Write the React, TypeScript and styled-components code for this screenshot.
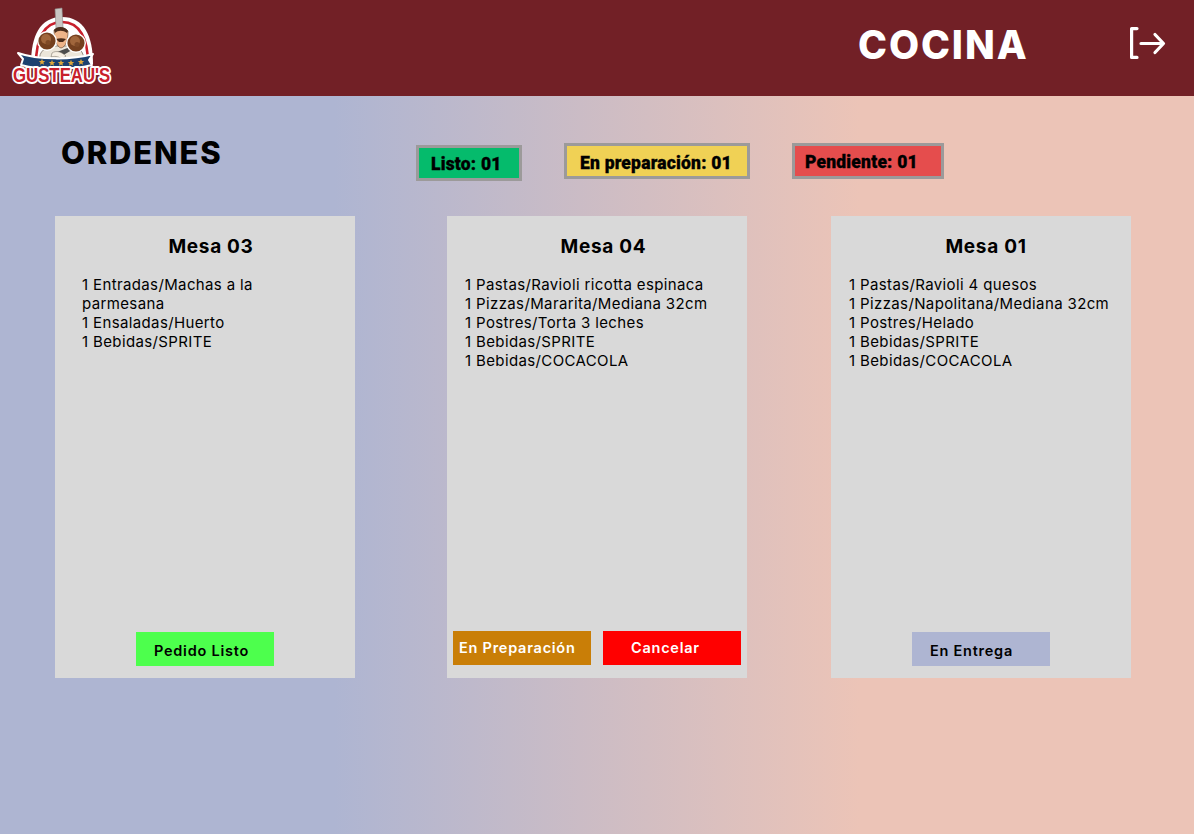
import React from "react";
import styled, { createGlobalStyle } from "styled-components";

const Global = createGlobalStyle`
  html, body { margin: 0; padding: 0; }
  body { font-family: "Inter", "Liberation Sans", sans-serif; color: #000; }
`;
const Page = styled.div`
  width: 1194px; height: 834px; overflow: hidden;
  background: linear-gradient(90deg, #aeb5d2 28%, #ecc4b7 72%);
`;
const Header = styled.header`
  height: 96px; background: #722026; display: flex; align-items: flex-start; padding-left: 5px;
`;
const LogoBox = styled.div` width: 110px; height: 86px; margin-top: 3px; flex: none; `;
const Section = styled.h1`
  margin: 21px 0 0 743px; color: #fff; font: 800 39px/48px "Inter", sans-serif; letter-spacing: 1.9px; width: 272px; flex: none;
`;
const IconBox = styled.div` width: 36px; height: 32px; margin-top: 27px; `;
const Summary = styled.div`
  height: 120px; display: flex;
`;
const Title = styled.h2`
  margin: 38px 0 0 61px; width: 355px; font: 800 31px/38px "Inter", sans-serif; letter-spacing: 1.8px; flex: none;
`;
const Badge = styled.div<{ $bg: string; $w: number; $top: number; $gap: number; $pad: number; $line: number }>`
  box-sizing: border-box; height: 36px; width: ${p => p.$w}px; margin-top: ${p => p.$top}px; margin-left: ${p => p.$gap}px;
  padding-left: ${p => p.$pad}px; background: ${p => p.$bg}; border: 3px solid #9c9a9a;
  font: 900 17.5px/${p => p.$line}px "Roboto", sans-serif; letter-spacing: .2px; -webkit-text-stroke: .3px #000; white-space: nowrap;
`;
const Cards = styled.div` display: flex; padding-left: 55px; `;
const Card = styled.article<{ $gap: number; $inset: number }>`
  box-sizing: border-box; width: 300px; height: 462px; margin-left: ${p => p.$gap}px; background: #d9d9d9;
  padding: 19px 6px 12px ${p => p.$inset}px; display: flex; flex-direction: column;
`;
const CardTitle = styled.h3<{ $shift: number }>`
  margin: 0 12px 16px ${p => p.$shift}px; text-align: center; font: 700 19px/24px "Inter", sans-serif; letter-spacing: .7px;
`;
const Items = styled.ul`
  list-style: none; margin: 0; padding: 0; flex: 1; font: 400 15px/19px "Inter", sans-serif; letter-spacing: .37px;
`;
const Item = styled.li``;
const Actions = styled.div<{ $left: number; $gap: number; $bottom: number }>`
  display: flex; gap: ${p => p.$gap}px; margin-left: ${p => p.$left}px; margin-bottom: ${p => p.$bottom}px;
`;
const Action = styled.button<{ $bg: string; $fg: string; $pad: number; $line: number }>`
  width: 138px; height: 34px; flex: none; border: 0; border-radius: 0; background: ${p => p.$bg}; color: ${p => p.$fg};
  padding: 0 0 0 ${p => p.$pad}px; text-align: left; font: 600 14.5px/${p => p.$line}px "Inter", sans-serif; letter-spacing: .75px; white-space: nowrap;
`;

const STAR = "M0 -3.2 L.9 -1 L3.2 -1 L1.4 .4 L2 2.7 L0 1.4 L-2 2.7 L-1.4 .4 L-3.2 -1 L-.9 -1 Z";

const Ball = ({ x, y }: { x: number; y: number }) => (
  <g>
    <circle cx={x} cy={y} r="10" fill="#fff" />
    <circle cx={x} cy={y} r="8.6" fill="#74401f" />
    <circle cx={x - 1} cy={y - 2} r="5" fill="#a0663c" />
    <circle cx={x + 1} cy={y + 1.5} r="2.5" fill="#7f4a27" />
  </g>
);

const Logo = () => (
  <svg width="110" height="86" viewBox="5 3 110 86" role="img" aria-label="Logo Gusteau's">
    <path d="M31 64 C31 36 40 17 62 17 C84 17 93 36 93 64 Z" fill="#fff" />
    <path d="M36 64 C36 39 44 22 62 22 C80 22 88 39 88 64" fill="#fff" stroke="#c8202c" strokeWidth="2.6" />
    <path d="M40 60 C38 52 46 46 55 46 L70 46 C78 46 85 52 83 60 Z" fill="#ece6da" stroke="#6b6257" strokeWidth=".7" />
    <path d="M55 9 L62 8 L63 28 L56 28 Z" fill="#c9c7c4" stroke="#8a8784" strokeWidth=".6" />
    <path d="M54 30 C57 27 65 27 68 31 C68 40 66 47 61 48 C57 47 54 40 54 30 Z" fill="#eeb489" stroke="#5a3a25" strokeWidth=".6" />
    <path d="M54 30 C57 26 65 26 68 31 L67 33 C63 30 58 30 55 33 Z" fill="#4a2c1b" />
    <path d="M56 39 C59 38 63 38 66 39 L63 42 L59 42 Z" fill="#4a2c1b" />
    <path d="M57 52 L70 47 L72 50 L60 57 Z" fill="#4d4d4d" />
    <path d="M52 53 C56 50 62 52 66 56 L62 59 C58 56 54 56 51 57 Z" fill="#f6efe3" stroke="#6b6257" strokeWidth=".5" />
    <Ball x={47} y={41} />
    <Ball x={76} y={43} />
    <path d="M18 53 C38 60 72 60 93 54 L89 60 L92 65 C72 70 40 70 21 65 L23 59 Z" fill="#1c416f" stroke="#fff" strokeWidth="2" strokeLinejoin="round" />
    <g fill="#e0a83a">
      <path d={STAR} transform="translate(42 62)" />
      <path d={STAR} transform="translate(52 63)" />
      <path d={STAR} transform="translate(61 63)" />
      <path d={STAR} transform="translate(71 63)" />
      <path d={STAR} transform="translate(81 62)" />
    </g>
    <text transform="translate(13 82) scale(.84 1)" fontFamily="Liberation Sans" fontWeight="700" fontSize="20" fill="#c8202c" stroke="#fff" strokeWidth="4" paintOrder="stroke" strokeLinejoin="round">GUSTEAU'S</text>
  </svg>
);

const LogoutIcon = () => (
  <svg width="36" height="32" viewBox="0 0 36 32" fill="none" stroke="#fff" strokeWidth="3.2" strokeLinecap="round" strokeLinejoin="round">
    <path d="M7 1.6 H1.6 V30.4 H7" />
    <path d="M11 16.5 H33 M25 7.5 L33.5 16.5 L25 25.5" />
  </svg>
);

export default function App() {
  return (
    <Page>
      <Global />
      <Header>
        <LogoBox><Logo /></LogoBox>
        <Section>COCINA</Section>
        <IconBox><LogoutIcon /></IconBox>
      </Header>
      <Summary>
        <Title>ORDENES</Title>
        <Badge $bg="#05bb6c" $w={106} $top={49} $gap={0} $pad={12} $line={32}>Listo: 01</Badge>
        <Badge $bg="#f0d155" $w={186} $top={47} $gap={42} $pad={13} $line={34}>En preparación: 01</Badge>
        <Badge $bg="#e54d4d" $w={152} $top={47} $gap={42} $pad={10} $line={32}>Pendiente: 01</Badge>
      </Summary>
      <Cards>
        <Card $gap={0} $inset={27}>
          <CardTitle $shift={3}>Mesa 03</CardTitle>
          <Items>
            <Item>1 Entradas/Machas a la<br />parmesana</Item>
            <Item>1 Ensaladas/Huerto</Item>
            <Item>1 Bebidas/SPRITE</Item>
          </Items>
          <Actions $left={54} $gap={0} $bottom={0}>
            <Action $bg="#4dff4d" $fg="#000" $pad={18} $line={38}>Pedido Listo</Action>
          </Actions>
        </Card>
        <Card $gap={92} $inset={18}>
          <CardTitle $shift={13}>Mesa 04</CardTitle>
          <Items>
            <Item>1 Pastas/Ravioli ricotta espinaca</Item>
            <Item>1 Pizzas/Mararita/Mediana 32cm</Item>
            <Item>1 Postres/Torta 3 leches</Item>
            <Item>1 Bebidas/SPRITE</Item>
            <Item>1 Bebidas/COCACOLA</Item>
          </Items>
          <Actions $left={-12} $gap={12} $bottom={1}>
            <Action $bg="#c97e07" $fg="#fff" $pad={6} $line={34}>En Preparación</Action>
            <Action $bg="#ff0000" $fg="#fff" $pad={28} $line={32}>Cancelar</Action>
          </Actions>
        </Card>
        <Card $gap={84} $inset={18}>
          <CardTitle $shift={10}>Mesa 01</CardTitle>
          <Items>
            <Item>1 Pastas/Ravioli 4 quesos</Item>
            <Item>1 Pizzas/Napolitana/Mediana 32cm</Item>
            <Item>1 Postres/Helado</Item>
            <Item>1 Bebidas/SPRITE</Item>
            <Item>1 Bebidas/COCACOLA</Item>
          </Items>
          <Actions $left={63} $gap={0} $bottom={0}>
            <Action $bg="#aeb5d2" $fg="#000" $pad={18} $line={38}>En Entrega</Action>
          </Actions>
        </Card>
      </Cards>
    </Page>
  );
}
